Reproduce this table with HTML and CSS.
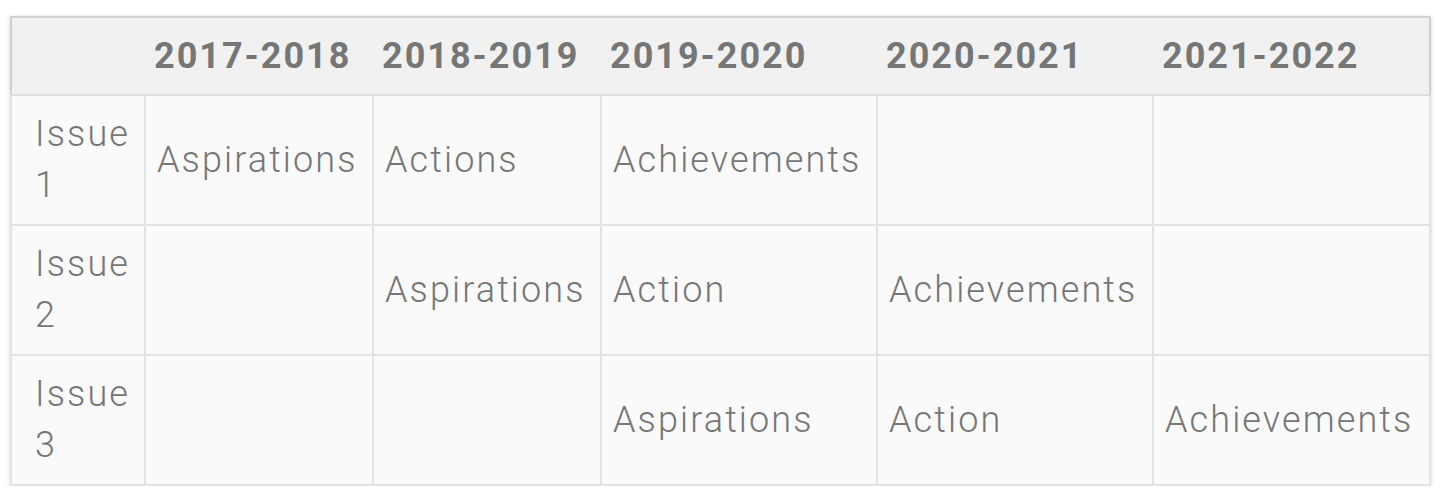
FILE: index.html
```html
<!DOCTYPE html>
<html lang="en">
<head>
<meta charset="utf-8">
<title>Issues timeline</title>
<link rel="stylesheet" href="styles.css">
</head>
<body>
<div class="wrap">
<table class="grid">
<colgroup>
<col class="c-issue">
<col class="c-narrow">
<col class="c-narrow">
<col class="c-wide">
<col class="c-wide">
<col class="c-last">
</colgroup>
<thead>
<tr>
<th></th>
<th>2017-2018</th>
<th>2018-2019</th>
<th>2019-2020</th>
<th>2020-2021</th>
<th>2021-2022</th>
</tr>
</thead>
<tbody>
<tr>
<td class="issue">Issue 1</td>
<td>Aspirations</td>
<td>Actions</td>
<td>Achievements</td>
<td></td>
<td></td>
</tr>
<tr>
<td class="issue">Issue 2</td>
<td></td>
<td>Aspirations</td>
<td>Action</td>
<td>Achievements</td>
<td></td>
</tr>
<tr>
<td class="issue">Issue 3</td>
<td></td>
<td></td>
<td>Aspirations</td>
<td>Action</td>
<td>Achievements</td>
</tr>
</tbody>
</table>
</div>
</body>
</html>
```
FILE: styles.css
```css
html, body {
  margin: 0;
  padding: 0;
  background: #ffffff;
}
.wrap {
  padding: 16px 0 0 10px;
}
.grid {
  width: 1420px;
  table-layout: fixed;
  border-collapse: collapse;
  border: 2px solid #d2d2d2;
  box-shadow: 0 1px 4px rgba(0, 0, 0, 0.18);
  font-family: Roboto, "Liberation Sans", sans-serif;
  color: #767676;
}
.c-issue { width: 134px; }
.c-narrow { width: 228px; }
.c-wide { width: 276px; }
.c-last { width: 277px; }
.grid thead tr {
  background: #f1f1f1;
  height: 78px;
}
.grid th {
  font-weight: 700;
  font-size: 36px;
  letter-spacing: 2px;
  text-align: left;
  padding: 0 9px;
  border-bottom: 2px solid #dedede;
  white-space: nowrap;
}
.grid tbody tr {
  background: #fafafa;
  height: 130px;
}
.grid td {
  font-weight: 300;
  font-size: 36px;
  line-height: 51px;
  letter-spacing: 2.1px;
  padding: 0 9px 0 11px;
  border: 2px solid #e2e2e2;
  vertical-align: middle;
  white-space: nowrap;
}
.grid td.issue {
  padding-left: 23px;
  padding-right: 6px;
  white-space: normal;
}
```
